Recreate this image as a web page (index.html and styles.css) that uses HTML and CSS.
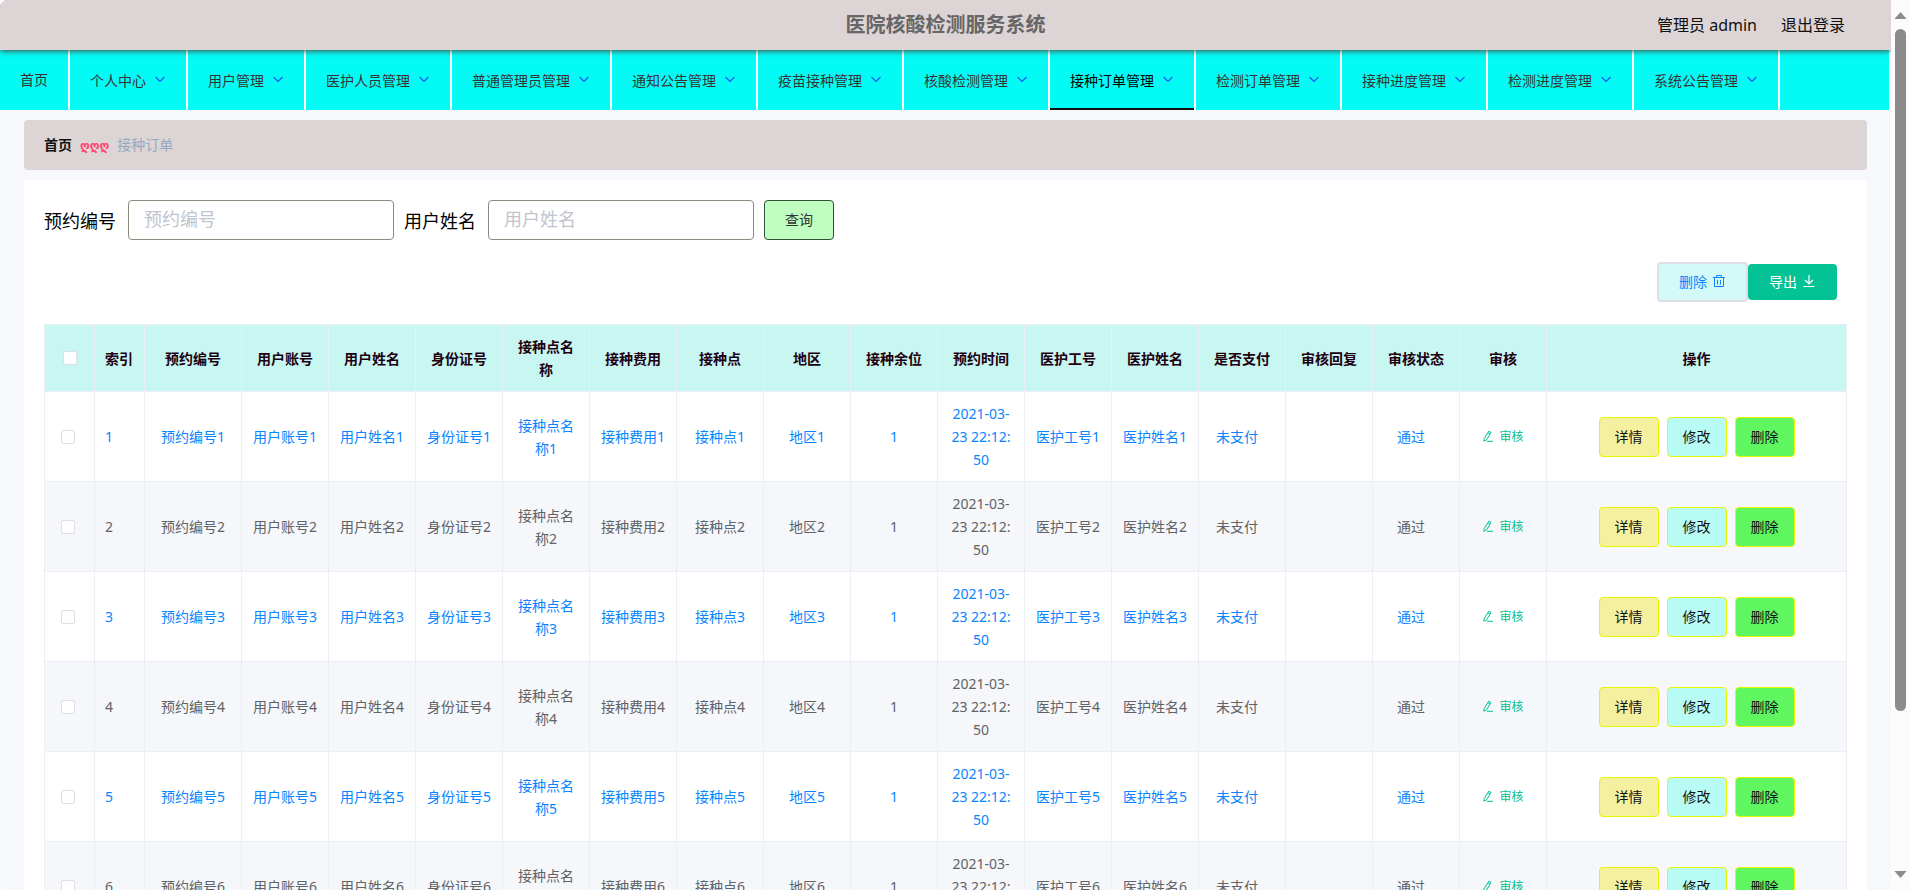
FILE: index.html
```
<!DOCTYPE html>
<html lang="zh-CN">
<head>
<meta charset="utf-8">
<title>医院核酸检测服务系统</title>
<link rel="stylesheet" href="styles.css">
</head>
<body>
<svg class="sprite" aria-hidden="true">
  <symbol id="arrow-down" viewBox="0 0 12 12"><path d="M1.500 3l4.500 4.500L10.500 3" fill="none" stroke="currentColor" stroke-width="1.200"/></symbol>
  <symbol id="trash" viewBox="0 0 14 14"><path d="M1 3.5h12M4.5 3.5v-2h5v2M2.5 3.5v9h9v-9M5.5 6v4.5M8.5 6v4.5" fill="none" stroke="currentColor"/></symbol>
  <symbol id="download" viewBox="0 0 14 14"><path d="M7 1v8.500M3 6l4 3.800L11 6M1.500 12.500h11" fill="none" stroke="currentColor" stroke-width="1.200"/></symbol>
  <symbol id="edit" viewBox="0 0 12 12"><path d="M6.800 1.200l2.200 1.300-4.600 7.600-2.600 1.100.4-2.700zM5.900 2.800l2.200 1.300M5 11.300h6" fill="none" stroke="currentColor"/></symbol>
</svg>
<div class="app">
  <header class="topbar">
    <h1 class="topbar-title">医院核酸检测服务系统</h1>
    <div class="topbar-user">
      <span>管理员 admin</span>
      <a class="logout" href="#logout">退出登录</a>
    </div>
  </header>
  <nav class="menu">
    <a class="menu-item menu-home" href="#home">首页</a>
    <a class="menu-item" href="#center">个人中心<svg class="menu-arrow"><use href="#arrow-down"/></svg></a>
    <a class="menu-item" href="#users">用户管理<svg class="menu-arrow"><use href="#arrow-down"/></svg></a>
    <a class="menu-item" href="#staff">医护人员管理<svg class="menu-arrow"><use href="#arrow-down"/></svg></a>
    <a class="menu-item" href="#admins">普通管理员管理<svg class="menu-arrow"><use href="#arrow-down"/></svg></a>
    <a class="menu-item" href="#notices">通知公告管理<svg class="menu-arrow"><use href="#arrow-down"/></svg></a>
    <a class="menu-item" href="#vaccine">疫苗接种管理<svg class="menu-arrow"><use href="#arrow-down"/></svg></a>
    <a class="menu-item" href="#tests">核酸检测管理<svg class="menu-arrow"><use href="#arrow-down"/></svg></a>
    <a class="menu-item is-active" href="#vaccine-orders">接种订单管理<svg class="menu-arrow"><use href="#arrow-down"/></svg></a>
    <a class="menu-item" href="#test-orders">检测订单管理<svg class="menu-arrow"><use href="#arrow-down"/></svg></a>
    <a class="menu-item" href="#vaccine-progress">接种进度管理<svg class="menu-arrow"><use href="#arrow-down"/></svg></a>
    <a class="menu-item" href="#test-progress">检测进度管理<svg class="menu-arrow"><use href="#arrow-down"/></svg></a>
    <a class="menu-item" href="#system">系统公告管理<svg class="menu-arrow"><use href="#arrow-down"/></svg></a>
  </nav>
  <main class="content">
    <div class="breadcrumb">
      <a class="crumb-home" href="#home">首页</a>
      <span class="crumb-sep">ღღღ</span>
      <span class="crumb-current">接种订单</span>
    </div>
    <section class="card">
      <form class="search">
        <label class="search-label" for="order-no">预约编号</label>
        <input class="search-input" id="order-no" type="text" placeholder="预约编号">
        <label class="search-label" for="user-name">用户姓名</label>
        <input class="search-input" id="user-name" type="text" placeholder="用户姓名">
        <button class="search-btn" type="button">查询</button>
      </form>
      <div class="toolbar">
        <button class="tool-delete" type="button">删除<svg class="tool-icon"><use href="#trash"/></svg></button>
        <button class="tool-export" type="button">导出<svg class="tool-icon"><use href="#download"/></svg></button>
      </div>
      <table class="orders">
        <colgroup>
          <col class="col-narrow"><col class="col-narrow"><col class="col-no">
          <col class="col-data" span="15">
          <col class="col-actions">
        </colgroup>
        <thead>
          <tr>
            <th><input class="check check-all" type="checkbox" aria-label="全选"></th>
            <th class="index">索引</th><th>预约编号</th><th>用户账号</th><th>用户姓名</th><th>身份证号</th><th>接种点名称</th><th>接种费用</th><th>接种点</th><th>地区</th><th>接种余位</th><th>预约时间</th><th>医护工号</th><th>医护姓名</th><th>是否支付</th><th>审核回复</th><th>审核状态</th><th>审核</th><th>操作</th>
          </tr>
        </thead>
        <tbody id="order-rows"></tbody>
      </table>
    </section>
  </main>
</div>
<div class="scrollbar" aria-hidden="true">
  <svg class="scroll-arrow" viewBox="0 0 14 8"><path d="M7 0l7 8H0z" fill="#8b8b8b"/></svg>
  <div class="scroll-track"><div class="scroll-thumb"></div></div>
  <svg class="scroll-arrow" viewBox="0 0 14 8"><path d="M7 8l7-8H0z" fill="#8b8b8b"/></svg>
</div>
<script src="app.js"></script>
</body>
</html>
```
FILE: styles.css
```
* { box-sizing: border-box; }
body {
  margin: 0;
  height: 100vh;
  display: flex;
  overflow: hidden;
  background: #fcfcfc;
  color: #000;
  font-family: "Noto Sans", "Noto Sans CJK SC", sans-serif;
  font-size: 14px;
}
a { color: inherit; text-decoration: none; }
button, input { font-family: inherit; margin: 0; }
button { padding: 0 0 2px; cursor: pointer; }
.sprite { display: none; }

.app {
  flex: 1;
  min-width: 0;
  overflow: hidden;
  background: #f7f8fb;
  border-radius: 8px 0 0 8px;
}

.topbar {
  position: relative;
  display: grid;
  grid-template-columns: 1fr auto 1fr;
  align-items: center;
  height: 50px;
  padding: 0 46px;
  background: #ddd5d5;
  box-shadow: 0 1px 6px #444;
}
.topbar-title {
  grid-column: 2;
  margin: 0;
  color: #666;
  font-size: 20px;
  line-height: 50px;
}
.topbar-user {
  justify-self: end;
  display: flex;
  gap: 24px;
  padding-bottom: 2px;
  color: #111;
  font-size: 16px;
}

.menu {
  display: flex;
  height: 60px;
  margin-right: 2px;
  background: #04fbf5;
}
.menu-item {
  display: flex;
  align-items: center;
  gap: 8px;
  padding: 0 20px;
  border-right: 2px solid #fff;
  color: #333;
  white-space: nowrap;
}
.menu-home { padding-bottom: 2px; }
.menu-item.is-active {
  color: #000;
  background: linear-gradient(#111, #111) bottom / 100% 2px no-repeat;
}
.menu-arrow { width: 12px; height: 12px; color: #1a55ff; }

.content { padding: 10px 24px 24px; }
.breadcrumb {
  display: flex;
  align-items: center;
  gap: 8px;
  height: 50px;
  padding: 0 20px 2px;
  border-radius: 4px;
  background: #ddd5d5;
}
.crumb-home { font-weight: 700; color: #111; }
.crumb-sep {
  padding-top: 4px;
  color: #ff4470;
  font-family: "DejaVu Sans", sans-serif;
  font-size: 12px;
  font-weight: 700;
}
.crumb-current { color: #97a8be; }

.card { margin-top: 10px; padding: 20px; background: #fff; }
.search { display: flex; align-items: center; }
.search-label { padding-right: 12px; font-size: 18px; }
.search-input {
  width: 266px;
  height: 40px;
  margin-right: 10px;
  padding: 0 15px 2px;
  border: 1px solid #8b8b7f;
  border-radius: 4px;
  background: #fff;
  font-size: 18px;
}
.search-input::placeholder { color: #c0c4cc; }
.search-btn {
  width: 70px;
  height: 40px;
  border: 1px solid #2f4f3f;
  border-radius: 4px;
  background: #c0fdc0;
  color: #333;
  font-size: 14px;
}

.toolbar {
  display: flex;
  justify-content: flex-end;
  align-items: center;
  margin: 22px 10px 22px 0;
}
.tool-delete, .tool-export {
  display: flex;
  align-items: center;
  justify-content: center;
  gap: 5px;
  border-radius: 4px;
  font-size: 14px;
}
.tool-delete {
  width: 91px;
  height: 40px;
  border: 2px solid #dcdfe6;
  background: #d4faf8;
  color: #0a84ff;
}
.tool-export {
  width: 89px;
  height: 36px;
  border: 0;
  background: #02c296;
  color: #fff;
}
.tool-icon { width: 14px; height: 14px; }

.orders {
  width: 100%;
  table-layout: fixed;
  border-collapse: separate;
  border-spacing: 0;
  border: solid #ebeef5;
  border-width: 1px 0 0 1px;
  line-height: 23px;
  text-align: center;
}
.col-narrow { width: 50px; }
.col-no { width: 97px; }
.col-data { width: 87px; }
.orders th, .orders td {
  padding: 10px;
  border: solid #ebeef5;
  border-width: 0 1px 1px 0;
}
.orders th { background: #c8f6f0; color: #200010; }
.orders td { height: 90px; color: #606266; }
.orders tbody tr:nth-child(odd) td { color: #0a84ff; }
.orders tbody tr:nth-child(even) td { background: #f5f7fa; }
.orders .index { text-align: left; white-space: nowrap; }
.tagged { margin-right: 10px; }

.check {
  appearance: none;
  display: block;
  width: 14px;
  height: 14px;
  margin: 0 auto 0 6px;
  border: 1px solid #dcdfe6;
  border-radius: 2px;
  background: #fff;
}
.check-all { margin-left: 8px; }

.audit {
  display: inline-flex;
  align-items: center;
  gap: 5px;
  padding: 0;
  border: 0;
  background: none;
  color: #02c296;
  font-size: 12px;
}
.audit-icon { width: 12px; height: 12px; }

.actions { display: flex; justify-content: center; gap: 8px; }
.action {
  width: 60px;
  height: 40px;
  border: 1px solid #e8f600;
  border-radius: 4px;
  color: #111;
  font-size: 14px;
}
.action-detail { background: #f4f0a0; }
.action-edit { background: #b8fbf5; }
.action-delete { background: #60f660; }

.scrollbar {
  display: flex;
  flex-direction: column;
  align-items: center;
  gap: 10px;
  width: 19px;
  padding: 12px 0;
}
.scroll-arrow { width: 13px; height: 7px; }
.scroll-track { flex: 1; width: 11px; }
.scroll-thumb { height: 82%; border-radius: 6px; background: #8b8b8b; }
```
FILE: app.js
```
const perRow = ["预约编号", "用户账号", "用户姓名", "身份证号", "接种点名称", "接种费用", "接种点", "地区"];

function orderRow(n) {
  const cells = perRow.map((name) => `<td>${name}${n}</td>`).join("");
  return `<tr>
    <td><input class="check" type="checkbox" aria-label="选择第${n}行"></td>
    <td class="index">${n}</td>
    ${cells}
    <td>1</td>
    <td>2021-03-<wbr>23 22:12:<wbr>50</td>
    <td>医护工号${n}</td>
    <td>医护姓名${n}</td>
    <td><span class="tagged">未支付</span></td>
    <td></td>
    <td><span class="tagged">通过</span></td>
    <td><button class="audit" type="button"><svg class="audit-icon"><use href="#edit"/></svg>审核</button></td>
    <td><div class="actions">
      <button class="action action-detail" type="button">详情</button>
      <button class="action action-edit" type="button">修改</button>
      <button class="action action-delete" type="button">删除</button>
    </div></td>
  </tr>`;
}

document.getElementById("order-rows").innerHTML = [1, 2, 3, 4, 5, 6].map(orderRow).join("");
```
